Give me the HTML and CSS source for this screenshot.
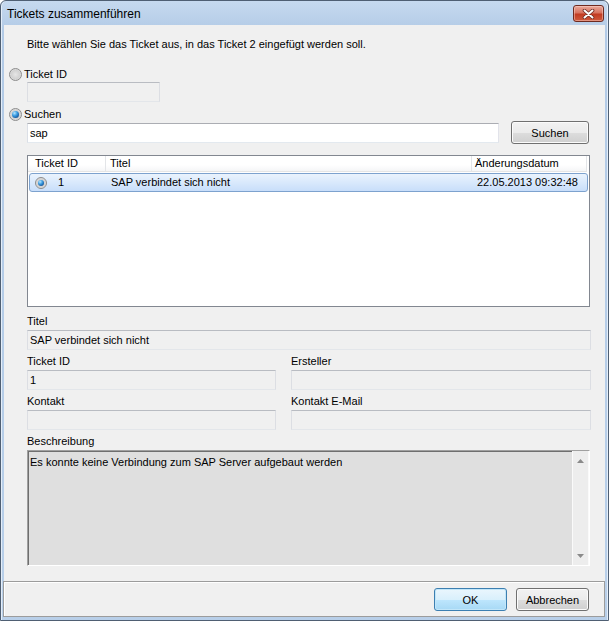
FILE: index.html
```html
<!DOCTYPE html>
<html lang="de">
<head>
<meta charset="utf-8">
<title>Tickets zusammenführen</title>
<link rel="stylesheet" href="styles.css">
</head>
<body>
<div class="window">
  <div class="titlebar">
    <span class="title">Tickets zusammenführen</span>
    <span class="close" aria-label="Schließen">
      <svg width="13" height="10" viewBox="0 0 13 10">
        <path d="M2.5 1.5 L10.5 8.5 M10.5 1.5 L2.5 8.5" stroke="#6b2a22" stroke-width="3.6" stroke-linecap="round" fill="none"/>
        <path d="M2.5 1.5 L10.5 8.5 M10.5 1.5 L2.5 8.5" stroke="#ffffff" stroke-width="2" stroke-linecap="round" fill="none"/>
      </svg>
    </span>
  </div>
  <div class="client">
    <div class="main">
      <p class="intro">Bitte wählen Sie das Ticket aus, in das Ticket 2 eingefügt werden soll.</p>

      <div class="radio-row"><span class="radio"></span><span class="radio-label">Ticket ID</span></div>
      <div class="field small"></div>

      <div class="radio-row second"><span class="radio on"></span><span class="radio-label">Suchen</span></div>
      <div class="search-row">
        <div class="field white">sap</div>
        <span class="btn">Suchen</span>
      </div>

      <div class="list">
        <div class="list-head">
          <div class="hcol h1">Ticket ID</div>
          <div class="hcol h2">Titel</div>
          <div class="hcol h3">Änderungsdatum</div>
        </div>
        <div class="list-row">
          <div class="rcol r1"><span class="radio on sm"></span><span class="num">1</span></div>
          <div class="rcol r2">SAP verbindet sich nicht</div>
          <div class="rcol r3">22.05.2013 09:32:48</div>
        </div>
      </div>

      <div class="details">
        <div class="group full">
          <div class="lbl">Titel</div>
          <div class="field">SAP verbindet sich nicht</div>
        </div>
        <div class="group">
          <div class="lbl">Ticket ID</div>
          <div class="field">1</div>
        </div>
        <div class="group">
          <div class="lbl">Ersteller</div>
          <div class="field"></div>
        </div>
        <div class="group">
          <div class="lbl">Kontakt</div>
          <div class="field"></div>
        </div>
        <div class="group">
          <div class="lbl">Kontakt E-Mail</div>
          <div class="field"></div>
        </div>
        <div class="group full">
          <div class="lbl">Beschreibung</div>
          <div class="memo">
            <div class="memo-text">Es konnte keine Verbindung zum SAP Server aufgebaut werden</div>
            <div class="vscroll">
              <svg width="7" height="4" viewBox="0 0 7 4"><path d="M0 4 L3.5 0 L7 4 Z" fill="#8a8a8a"/></svg>
              <svg width="7" height="4" viewBox="0 0 7 4"><path d="M0 0 L3.5 4 L7 0 Z" fill="#8a8a8a"/></svg>
            </div>
          </div>
        </div>
      </div>
    </div>

    <div class="footer">
      <span class="btn default">OK</span>
      <span class="btn">Abbrechen</span>
    </div>
  </div>
</div>
</body>
</html>
```

FILE: styles.css
```css
* {
  box-sizing: border-box;
}

html, body {
  margin: 0;
  padding: 0;
  background: #ffffff;
}

body {
  width: 609px;
  height: 621px;
  font-family: "Liberation Sans", Arial, sans-serif;
  font-size: 11px;
  color: #000;
}

.window {
  width: 609px;
  height: 621px;
  display: flex;
  flex-direction: column;
  border: 1px solid #4f5f73;
  border-radius: 6px 6px 0 0;
  background: linear-gradient(#c6d9ef, #b2cae6 30px, #b8cfe9);
  box-shadow: inset 1px 0 0 #e4eef9, inset -1px 0 0 #e4eef9;
}

.titlebar {
  height: 24px;
  flex: none;
  display: flex;
  align-items: flex-start;
  justify-content: space-between;
  padding: 0 4px 0 6px;
}

.title {
  font-size: 12px;
  line-height: 16px;
  margin-top: 5px;
  color: #000;
}

.close {
  margin-top: 4px;
  width: 31px;
  height: 17px;
  display: flex;
  align-items: center;
  justify-content: center;
  border: 1px solid #6e2a20;
  border-radius: 3px;
  background: linear-gradient(#e9a99c, #d8735f 45%, #c23b22 55%, #cf5a3d);
  box-shadow: inset 0 0 0 1px rgba(255, 220, 210, 0.45);
}

.client {
  flex: 1;
  margin: 0 3px 3px;
  background: #f0f0f0;
  display: flex;
  flex-direction: column;
}

.main {
  flex: 1;
  padding: 12px 14px 0 23px;
}

.intro {
  margin: 0 0 16px;
  line-height: 14px;
}

.radio-row {
  display: flex;
  align-items: center;
  height: 14px;
  margin-left: -18px;
}

.radio-row.second {
  margin-top: 5px;
}

.radio-label {
  margin-left: 2px;
  line-height: 14px;
}

.radio {
  position: relative;
  width: 13px;
  height: 13px;
  border-radius: 50%;
  border: 1px solid #8c8c8c;
  background: radial-gradient(circle at 50% 50%, #e6e6e6 0%, #d2d2d2 55%, #f4f4f4 100%);
  flex: none;
}

.radio.on::after {
  content: "";
  position: absolute;
  left: 2px;
  top: 2px;
  width: 7px;
  height: 7px;
  border-radius: 50%;
  background: radial-gradient(circle at 35% 30%, #b6e6ff 0%, #3a9be0 40%, #165aa0 75%, #0e3f76 100%);
}

.radio.sm {
  width: 12px;
  height: 12px;
}

.radio.sm.on::after {
  left: 2px;
  top: 2px;
  width: 6px;
  height: 6px;
}

.field {
  height: 20px;
  line-height: 18px;
  padding: 0 2px;
  border: 1px solid;
  border-color: #b9bcc2 #dcdee3 #e3e6ea #dcdee3;
  background: #f0f0f0;
  white-space: nowrap;
}

.field.small {
  width: 133px;
  margin-top: 1px;
}

.field.white {
  background: #ffffff;
  border-color: #abadb3 #e2e3ea #e3e9ef #dbdfe6;
  flex: 1;
}

.search-row {
  display: flex;
  align-items: center;
  gap: 12px;
  height: 23px;
  padding-right: 2px;
}

.btn {
  width: 78px;
  height: 23px;
  display: flex;
  align-items: center;
  justify-content: center;
  border: 1px solid #707070;
  border-radius: 3px;
  background: linear-gradient(#f2f2f2, #ebebeb 50%, #dddddd 51%, #cfcfcf);
  box-shadow: inset 0 0 0 1px #fbfbfb;
  flex: none;
}

.list {
  margin-top: 11px;
  width: 563px;
  height: 152px;
  border: 1px solid #828790;
  background: #ffffff;
}

.list-head {
  display: grid;
  grid-template-columns: 78px 366px 115px;
  height: 16px;
  background: linear-gradient(#ffffff, #ffffff 60%, #f5f6f7);
  border-bottom: 1px solid #e5e5e5;
  width: 559px;
}

.hcol {
  line-height: 15px;
  border-right: 1px solid #e3e5e8;
  white-space: nowrap;
}

.h1 { padding-left: 7px; }
.h2 { padding-left: 4px; }
.h3 { padding-left: 3px; }

.list-row {
  display: grid;
  grid-template-columns: 76px 366px 1fr;
  height: 19px;
  margin: 1px 1px 0;
  border: 1px solid #7da2ce;
  border-radius: 3px;
  background: linear-gradient(#eaf3fd, #d9e9fc 50%, #c8defa);
  align-items: center;
  line-height: 17px;
  white-space: nowrap;
}

.rcol {
  padding-left: 5px;
}

.r1 {
  display: flex;
  align-items: center;
}

.num {
  margin-left: 11px;
}

.details {
  margin-top: 7px;
  display: grid;
  grid-template-columns: 249px 1fr;
  column-gap: 15px;
  row-gap: 4px;
}

.group.full {
  grid-column: 1 / -1;
}

.lbl {
  line-height: 14px;
  margin-bottom: 2px;
  white-space: nowrap;
}

.memo {
  height: 116px;
  display: flex;
  border: 1px solid;
  border-color: #a0a0a0 #ffffff #ffffff #a0a0a0;
  box-shadow: inset 1px 1px 0 #6f6f6f;
  background: #dfdfdf;
  width: 563px;
}

.memo-text {
  flex: 1;
  padding: 4px 2px 0 2px;
  line-height: 14px;
}

.vscroll {
  width: 17px;
  display: flex;
  flex-direction: column;
  justify-content: space-between;
  align-items: center;
  padding: 8px 0 7px;
  background: #ededed;
  border-left: 1px solid #fafafa;
  border-right: 1px solid #fafafa;
}

.footer {
  height: 36px;
  flex: none;
  margin-left: -1px;
  border: 1px solid #9c9c9c;
  box-shadow: inset 1px 1px 0 #ffffff;
  display: flex;
  justify-content: flex-end;
  align-items: center;
  gap: 9px;
  padding: 1px 15px 0 0;
}

.footer .btn {
  width: 73px;
}

.btn.default {
  border-color: #3c7fb1;
  background: linear-gradient(#eaf6fd, #d9f0fc 50%, #bee6fd 51%, #a7d9f5);
  box-shadow: inset 0 0 0 1px #c2e6f9;
}
```
